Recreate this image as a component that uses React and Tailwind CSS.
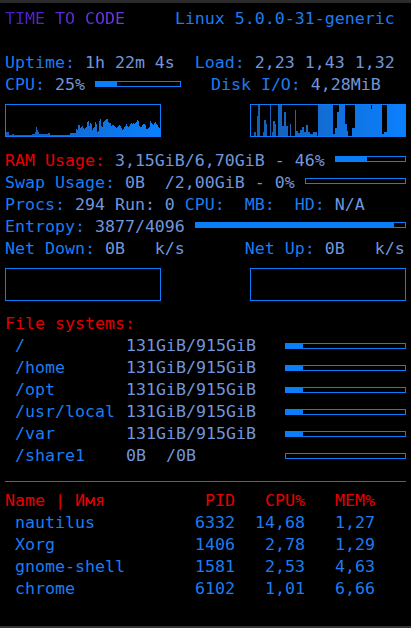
const B = 'text-[#1c7cf0]'
const L = 'text-[#7096dc]'
const R = 'text-[#e40000]'

// cpu history, inner coords of the 154x31 graph
const cpuSegs = [
  [0, 3, 4], [3, 6, 1], [6, 8, 2], [8, 26, 1], [26, 29, 2], [29, 30, 4], [30, 31, 9],
  [31, 32, 6], [32, 33, 4], [33, 42, 2], [42, 44, 3], [44, 64, 1], [64, 70, 3],
  [70, 72, 6], [72, 74, 12], [74, 79, 8], [79, 81, 10], [81, 83, 13], [83, 84, 9],
  [84, 86, 14], [86, 89, 7], [89, 91, 13], [91, 93, 6], [93, 95, 15], [95, 97, 9],
  [97, 102, 16], [102, 105, 14], [105, 111, 10], [111, 116, 9], [116, 120, 8],
  [120, 127, 11], [127, 133, 14], [133, 136, 10], [136, 140, 11], [140, 144, 8],
  [144, 150, 13], [150, 154, 10],
]

const ioSegs = [
  [3, 5, 4], [6, 7, 20], [7, 9, 31], [12, 13, 4], [13, 15, 16], [15, 16, 12],
  [19, 20, 31], [21, 22, 4], [22, 24, 15], [24, 25, 12], [27, 31, 31], [31, 33, 10],
  [33, 35, 24], [35, 37, 10], [39, 40, 12], [44, 45, 26], [45, 47, 5], [47, 49, 3],
  [49, 51, 6], [51, 53, 9], [53, 55, 4], [55, 57, 11], [57, 59, 4], [59, 62, 2],
  [62, 66, 4], [67, 82, 31], [82, 84, 2], [84, 86, 8], [86, 88, 24], [88, 94, 31],
  [94, 96, 12], [96, 97, 5], [101, 104, 8], [104, 120, 31], [120, 121, 27],
  [121, 131, 31], [131, 133, 2], [133, 136, 4], [136, 154, 31],
]

function heights(segs, jitter) {
  const h = new Array(154).fill(0)
  segs.forEach(([a, b, v]) => {
    for (let i = a; i < b; i++) h[i] = v
  })
  if (jitter) {
    for (let i = 70; i < 154; i++) {
      h[i] = Math.max(1, Math.min(31, h[i] + Math.round(Math.sin(i * 7.3) * 1.6)))
    }
  }
  return h
}

function graphPath(h) {
  let d = 'M0,31'
  h.forEach((v, i) => {
    d += ` L${i},${31 - v} L${i + 1},${31 - v}`
  })
  return d + ' L154,31 Z'
}

function Graph({ segs, id, jitter }) {
  return (
    <div className="h-[33px] w-[156px] border border-[#0a7df8]">
      <svg width="154" height="31" viewBox="0 0 154 31" className="block">
        <defs>
          <linearGradient id={id} x1="0" y1="0" x2="154" y2="0" gradientUnits="userSpaceOnUse">
            <stop offset="0" stopColor="#1a5cb0" />
            <stop offset="1" stopColor="#0a80ff" />
          </linearGradient>
        </defs>
        {segs && <path d={graphPath(heights(segs, jitter))} fill={`url(#${id})`} />}
      </svg>
    </div>
  )
}

function Bar({ pct, className }) {
  return (
    <div className={`h-[6px] border border-[#0a7df8] ${className}`}>
      <div className="h-full bg-[#0a7df8]" style={{ width: `${pct}%` }} />
    </div>
  )
}

const mounts = [
  { path: '/', used: '131GiB/915GiB', pct: 14 },
  { path: '/home', used: '131GiB/915GiB', pct: 14 },
  { path: '/opt', used: '131GiB/915GiB', pct: 14 },
  { path: '/usr/local', used: '131GiB/915GiB', pct: 14 },
  { path: '/var', used: '131GiB/915GiB', pct: 14 },
  { path: '/share1', used: '0B  /0B', pct: 0 },
]

const procs = [
  ['nautilus', '6332', '14,68', '1,27'],
  ['Xorg', '1406', '2,78', '1,29'],
  ['gnome-shell', '1581', '2,53', '4,63'],
  ['chrome', '6102', '1,01', '6,66'],
]

export default function App() {
  return (
    <div className="flex h-[628px] w-[411px] flex-col overflow-hidden whitespace-pre bg-black font-['DejaVu_Sans_Mono',monospace] text-[16.6px] leading-[22px]">
      <div className="h-[3px] bg-[#2b2b2b]" />

      <div className="flex-1 px-[5px] pt-[5px]">
        {/* header */}
        <div className="flex">
          <span className="bg-gradient-to-r from-[#4a18c8] to-[#6a3aec] bg-clip-text text-transparent">TIME TO CODE</span>
          <span className={`ml-[50px] ${B}`}>Linux 5.0.0-31-generic</span>
        </div>
        <div className="h-[22px]" />

        <div className="flex">
          <span className={B}>Uptime:</span>
          <span className={L}> 1h 22m 4s  </span>
          <span className={B}>Load:</span>
          <span className={L}> 2,23 1,43 1,32</span>
        </div>
        <div className="flex">
          <span className={B}>CPU:</span>
          <span className={L}> 25%</span>
          <Bar pct={25} className="ml-[10px] mt-[7px] w-[86px]" />
          <span className={`ml-[30px] ${B}`}>Disk I/O:</span>
          <span className={L}> 4,28MiB</span>
        </div>

        <div className="mt-[8px] flex justify-between">
          <Graph segs={cpuSegs} id="cpug" jitter />
          <Graph segs={ioSegs} id="iog" />
        </div>

        {/* memory */}
        <div className="mt-[13px] flex">
          <span className={R}>RAM Usage:</span>
          <span className={L}> 3,15GiB/6,70GiB - 46%</span>
          <Bar pct={45} className="ml-[10px] mt-[6px] flex-1" />
        </div>
        <div className="flex">
          <span className={B}>Swap Usage:</span>
          <span className={L}> 0B  /2,00GiB - 0%</span>
          <Bar pct={0} className="ml-[10px] mt-[6px] flex-1" />
        </div>
        <div className="flex">
          <span className={B}>Procs:</span>
          <span className={L}> 294 Run: 0 </span>
          <span className={B}>CPU:  MB:  HD:</span>
          <span className={L}> N/A</span>
        </div>
        <div className="flex">
          <span className={B}>Entropy:</span>
          <span className={L}> 3877/4096</span>
          <Bar pct={94.6} className="ml-[10px] mt-[6px] flex-1" />
        </div>
        <div className="flex">
          <span className={B}>Net Down:</span>
          <span className={L}> 0B   k/s      </span>
          <span className={B}>Net Up:</span>
          <span className={L}> 0B   k/s</span>
        </div>

        <div className="mt-[8px] flex justify-between">
          <Graph id="down" />
          <Graph id="up" />
        </div>

        {/* file systems */}
        <div className={`mt-[12px] ${R}`}>File systems:</div>
        {mounts.map((m) => (
          <div key={m.path} className="flex">
            <span className={`w-[121px] pl-[10px] ${B}`}>{m.path}</span>
            <span className={L}>{m.used}</span>
            <Bar pct={m.pct} className="ml-auto mt-[8px] w-[121px]" />
          </div>
        ))}

        <div className="mt-[14px] h-px bg-[#1a6fd8]" />

        {/* processes */}
        <div className={`mt-[8px] flex ${R}`}>
          <span className="w-[150px]">Name | Имя</span>
          <span className="w-[80px] text-right">PID</span>
          <span className="w-[70px] text-right">CPU%</span>
          <span className="w-[70px] text-right">MEM%</span>
        </div>
        {procs.map(([name, pid, cpu, mem]) => (
          <div key={name} className={`flex ${B}`}>
            <span className="w-[150px] pl-[10px]">{name}</span>
            <span className="w-[80px] text-right">{pid}</span>
            <span className="w-[70px] text-right">{cpu}</span>
            <span className="w-[70px] text-right">{mem}</span>
          </div>
        ))}
      </div>

      <div className="h-[2px] bg-[#333333]" />
    </div>
  )
}
